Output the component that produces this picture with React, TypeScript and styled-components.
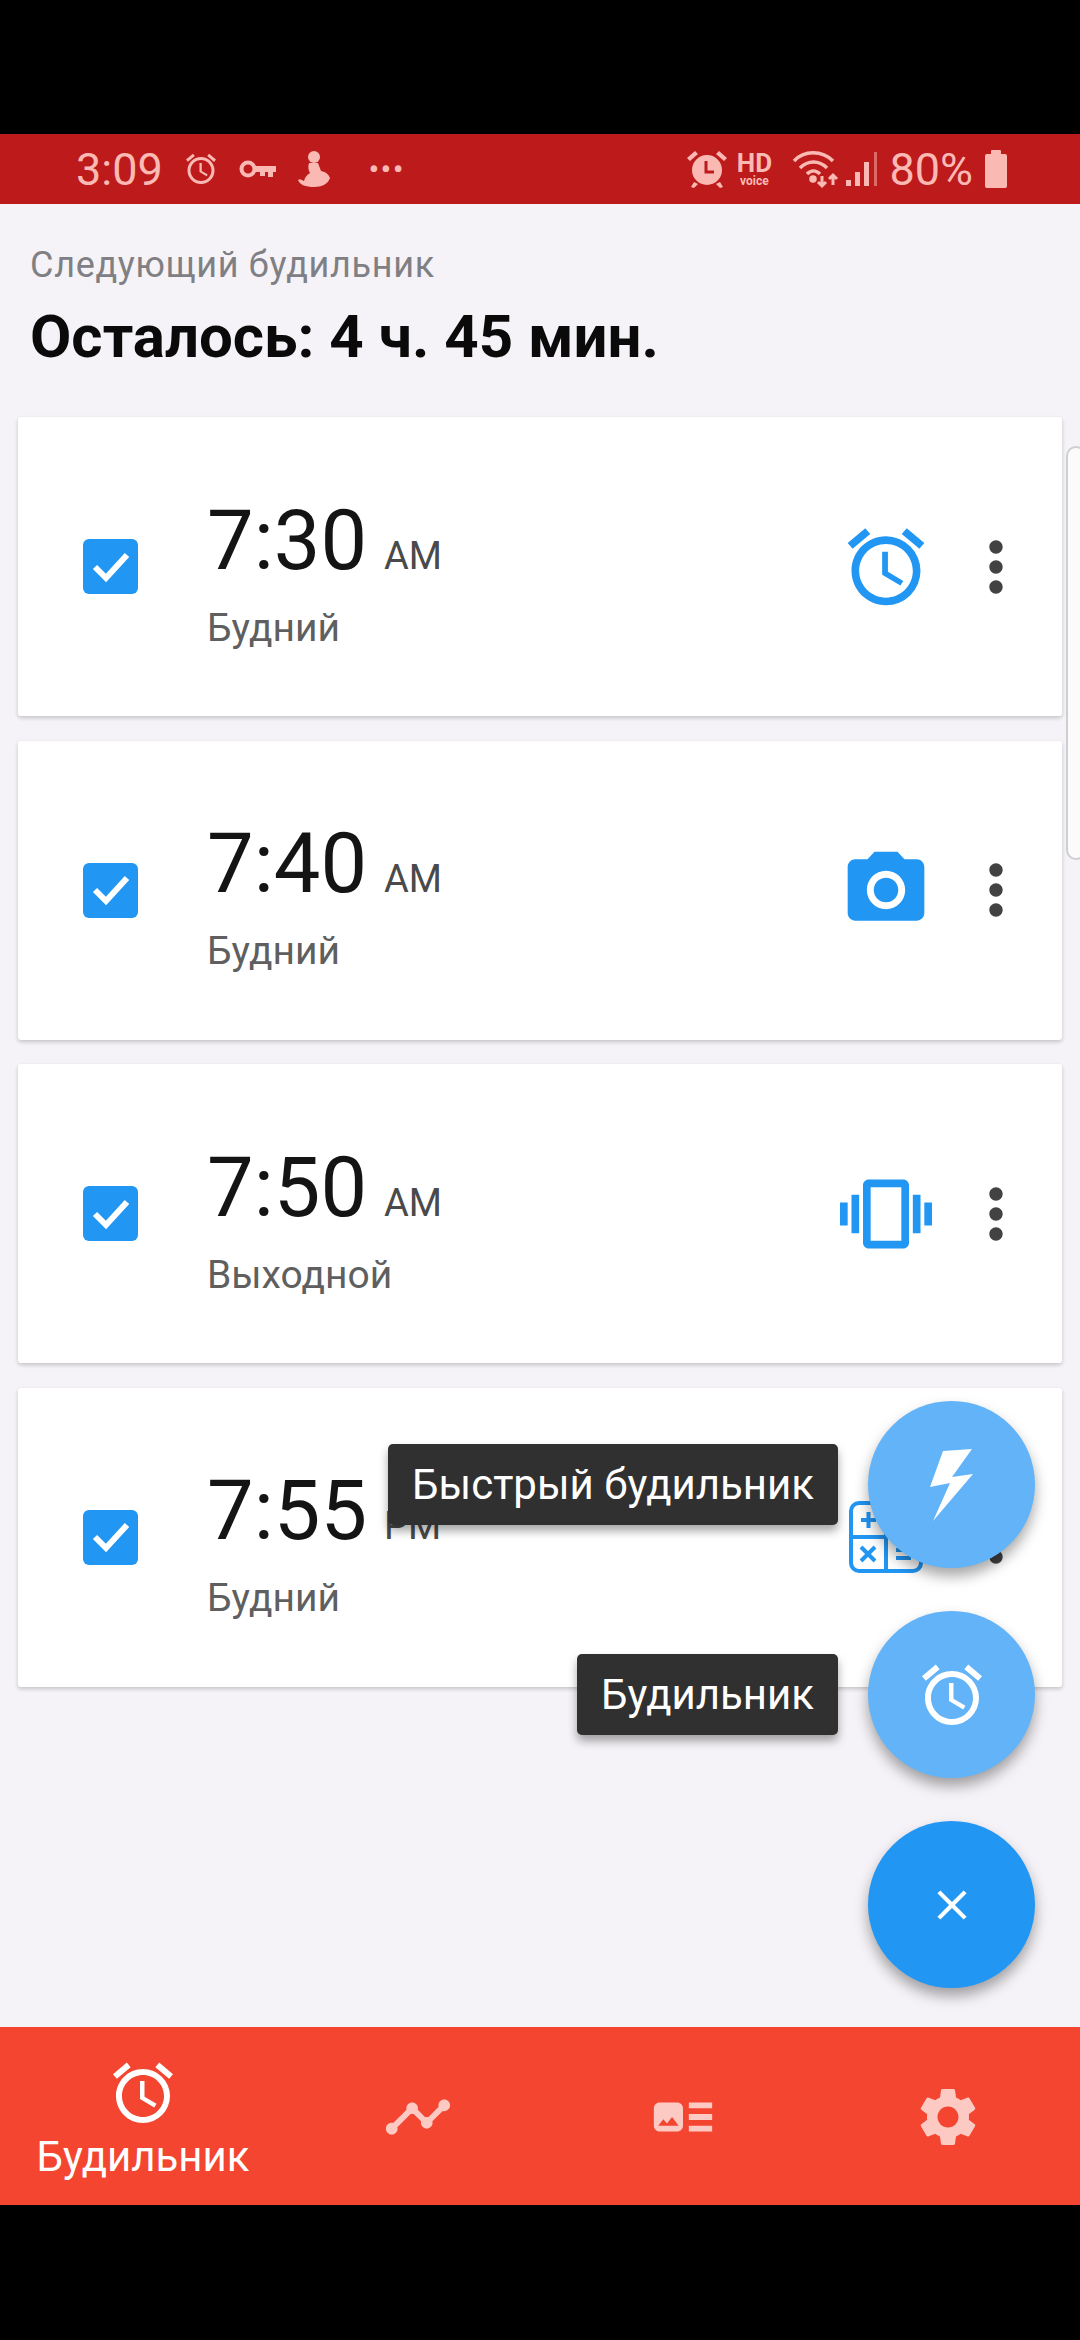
import React from "react";
import styled, { createGlobalStyle } from "styled-components";
import {
  MdAccessAlarm,
  MdArtTrack,
  MdClose,
  MdMoreVert,
  MdPhotoCamera,
  MdSettings,
  MdTimeline,
  MdVibration,
} from "react-icons/md";

const GlobalStyle = createGlobalStyle`
  html, body {
    margin: 0;
    padding: 0;
    background: #000;
  }
  * {
    box-sizing: border-box;
  }
`;

const Screen = styled.div`
  position: relative;
  width: 1080px;
  height: 2340px;
  display: flex;
  flex-direction: column;
  overflow: hidden;
  background: #000;
  font-family: Roboto, "Noto Sans", sans-serif;
`;

const BlackBar = styled.div<{ $height: number }>`
  flex: none;
  height: ${(p) => p.$height}px;
  background: #000;
`;

const StatusBar = styled.div`
  flex: none;
  height: 70px;
  padding: 0 73px 0 76px;
  display: flex;
  align-items: center;
  justify-content: space-between;
  background: #bc1a1b;
  color: #fbb9b4;
`;

const StatusGroup = styled.div`
  display: flex;
  align-items: center;
`;

const StatusTime = styled.span`
  font-size: 45px;
  margin-right: 20px;
`;

const StatusSlot = styled.span<{ $left: number }>`
  display: flex;
  margin-left: ${(p) => p.$left}px;
`;

const StatusDots = styled.span`
  margin-left: 38px;
  font-size: 28px;
  font-weight: 700;
  letter-spacing: 2px;
`;

const StatusPercent = styled.span`
  font-size: 45px;
  margin: 0 12px 0 9px;
`;

const HdBadge = styled.div`
  width: 40px;
  margin: 0 18px 0 6px;
  display: flex;
  flex-direction: column;
  align-items: center;
  font-weight: 700;
  font-size: 26px;
  line-height: 24px;
  span {
    font-size: 12px;
    line-height: 12px;
  }
`;

const Content = styled.main`
  flex: 1;
  display: flex;
  flex-direction: column;
  background: #f5f3f7;
`;

const Header = styled.header`
  height: 213px;
  padding: 40px 30px 0;
`;

const NextLabel = styled.div`
  font-size: 36px;
  line-height: 42px;
  letter-spacing: 0.7px;
  color: #808084;
`;

const Remaining = styled.h1`
  margin: 20px 0 0;
  font-size: 60px;
  line-height: 62px;
  font-weight: 700;
  color: #0a0a0a;
`;

const AlarmList = styled.div`
  display: flex;
  flex-direction: column;
  gap: 24.5px;
  padding: 0 18px;
`;

const Card = styled.section`
  height: 299px;
  padding-left: 65px;
  display: flex;
  align-items: center;
  background: #fff;
  border-radius: 3px;
  box-shadow: 0 2px 4px rgba(0, 0, 0, 0.2);
`;

const Check = styled.div`
  flex: none;
  width: 55px;
  height: 55px;
  display: flex;
  align-items: center;
  justify-content: center;
  border-radius: 6px;
  background: #2196f3;
  color: #fff;
`;

const AlarmText = styled.div`
  flex: 1;
  margin-left: 69px;
  padding-top: 8px;
`;

const TimeRow = styled.div`
  display: flex;
  align-items: baseline;
  color: #141414;
`;

const Time = styled.span`
  font-size: 83px;
  line-height: 100px;
`;

const Meridiem = styled.span`
  margin-left: 17px;
  font-size: 38px;
  color: #4a4a4a;
`;

const Repeat = styled.div`
  margin-top: 14px;
  font-size: 39px;
  line-height: 46px;
  color: #5f5f5f;
`;

const TaskIcon = styled.div`
  flex: none;
  width: 92px;
  display: flex;
  justify-content: center;
  color: #2196f3;
  font-size: 92px;
`;

const MoreButton = styled.div`
  flex: none;
  width: 80px;
  margin: 0 26px 0 24px;
  display: flex;
  justify-content: center;
  color: #424242;
  font-size: 80px;
`;

const EdgeHandle = styled.div`
  position: absolute;
  top: 446px;
  right: -6px;
  width: 20px;
  height: 414px;
  border: 2px solid #cfcfd2;
  border-radius: 14px;
  background: #fbfbfc;
`;

const FabStack = styled.div`
  position: absolute;
  top: 1401px;
  right: 45px;
  display: flex;
  flex-direction: column;
  align-items: flex-end;
  gap: 43px;
`;

const FabRow = styled.div`
  display: flex;
  align-items: center;
  gap: 30px;
`;

const FabTip = styled.div`
  height: 81px;
  padding: 0 24px;
  display: flex;
  align-items: center;
  border-radius: 5px;
  background: #303030;
  color: #fff;
  font-size: 42px;
  box-shadow: 0 6px 10px rgba(0, 0, 0, 0.35);
`;

const Fab = styled.div<{ $main?: boolean }>`
  width: 167px;
  height: 167px;
  display: flex;
  align-items: center;
  justify-content: center;
  border-radius: 50%;
  background: ${(p) => (p.$main ? "#2196f3" : "#62b3f7")};
  color: #fff;
  font-size: ${(p) => (p.$main ? 50 : 72)}px;
  box-shadow: 0 8px 14px rgba(0, 0, 0, 0.35);
`;

const BottomNav = styled.nav`
  flex: none;
  height: 178px;
  display: grid;
  grid-template-columns: 286px 1fr 1fr 1fr;
  background: #f44531;
`;

const NavItem = styled.div<{ $active?: boolean }>`
  display: flex;
  flex-direction: column;
  align-items: center;
  justify-content: center;
  color: ${(p) => (p.$active ? "#fff" : "#fdc9c3")};
  font-size: ${(p) => (p.$active ? 72 : 70)}px;
  padding-top: ${(p) => (p.$active ? 4 : 2)}px;
`;

const NavLabel = styled.span`
  font-size: 42px;
  line-height: 44px;
  margin-top: 6px;
`;

function CheckMark() {
  return (
    <svg width="40" height="34" viewBox="0 0 40 34" fill="none" stroke="currentColor" strokeWidth="6">
      <path d="M4 17l11 11L36 5" />
    </svg>
  );
}

function KeyIcon() {
  return (
    <svg width="38" height="20" viewBox="0 0 38 20" fill="none">
      <circle cx="9" cy="10" r="6.5" stroke="currentColor" strokeWidth="4" />
      <path d="M15 7h22v6h-3v5h-5v-5h-3v4h-5v-4h-6z" fill="currentColor" />
    </svg>
  );
}

function FigureIcon() {
  return (
    <svg width="34" height="38" viewBox="0 0 34 38" fill="currentColor">
      <circle cx="17" cy="7" r="6" />
      <path d="M12 13h9l3 8c5 1 8 4 9 7-2 6-8 9-16 9S3 35 1 30c2-1 4 0 6 1 1-4 3-6 6-8-2-3-2-7-1-10z" />
    </svg>
  );
}

function FilledAlarmIcon() {
  return (
    <svg width="42" height="40" viewBox="0 0 42 40">
      <path d="M1 9 9 2l3 3-8 7zM41 9l-8-7-3 3 8 7z" fill="currentColor" />
      <path d="M8 33l-3 5 3 1 4-4zM34 33l3 5-3 1-4-4z" fill="currentColor" />
      <circle cx="21" cy="21" r="15" fill="currentColor" />
      <path d="M20 12v11h8" fill="none" stroke="#bc1a1b" strokeWidth="3" />
    </svg>
  );
}

function WifiIcon() {
  return (
    <svg width="48" height="40" viewBox="0 0 48 40" fill="none" stroke="currentColor" strokeWidth="3.5">
      <path d="M2 12C12 1 30 1 41 12" />
      <path d="M8 19c8-8 19-8 27 0" />
      <path d="M15 25c4-4 9-4 13 0" />
      <circle cx="21" cy="30" r="2" fill="currentColor" />
      <path d="M30 27v10M26 33l4 4 4-4M41 36V26M37 30l4-4 4 4" strokeWidth="3" />
    </svg>
  );
}

function SignalIcon() {
  return (
    <svg width="34" height="36" viewBox="0 0 34 36" fill="currentColor">
      <rect x="0" y="29" width="5" height="6" />
      <rect x="9" y="21" width="5" height="14" />
      <rect x="18" y="11" width="5" height="24" />
      <rect x="28" y="1" width="3" height="34" opacity="0.5" />
    </svg>
  );
}

function BatteryIcon() {
  return (
    <svg width="22" height="38" viewBox="0 0 22 38" fill="currentColor">
      <rect x="6" y="0" width="10" height="5" rx="1" />
      <rect x="0" y="4" width="22" height="34" rx="2" />
    </svg>
  );
}

function CalculatorIcon() {
  return (
    <svg width="74" height="72" viewBox="0 0 74 72" fill="none" stroke="currentColor" strokeWidth="4">
      <rect x="2" y="2" width="70" height="68" rx="8" />
      <path d="M37 2v68M2 36h70" />
      <path d="M12 19h15M19.500 11v16M47 19h15M12 46l14 14M26 46 12 60M47 49h15M47 57h15" />
    </svg>
  );
}

function BoltIcon() {
  return (
    <svg width="43" height="72" viewBox="0 0 43 72" fill="currentColor">
      <path d="M42 0 13 2 0 38l20-4L3 72l40-47-21 3z" />
    </svg>
  );
}

const alarms = [
  { time: "7:30", meridiem: "AM", repeat: "Будний", icon: <MdAccessAlarm /> },
  { time: "7:40", meridiem: "AM", repeat: "Будний", icon: <MdPhotoCamera /> },
  { time: "7:50", meridiem: "AM", repeat: "Выходной", icon: <MdVibration /> },
  { time: "7:55", meridiem: "PM", repeat: "Будний", icon: <CalculatorIcon /> },
];

export default function App() {
  return (
    <Screen>
      <GlobalStyle />
      <BlackBar $height={134} />
      <StatusBar>
        <StatusGroup>
          <StatusTime>3:09</StatusTime>
          <MdAccessAlarm size={36} />
          <StatusSlot $left={20}>
            <KeyIcon />
          </StatusSlot>
          <StatusSlot $left={20}>
            <FigureIcon />
          </StatusSlot>
          <StatusDots>•••</StatusDots>
        </StatusGroup>
        <StatusGroup>
          <FilledAlarmIcon />
          <HdBadge>
            HD
            <span>voice</span>
          </HdBadge>
          <WifiIcon />
          <StatusSlot $left={6}>
            <SignalIcon />
          </StatusSlot>
          <StatusPercent>80%</StatusPercent>
          <BatteryIcon />
        </StatusGroup>
      </StatusBar>

      <Content>
        <Header>
          <NextLabel>Следующий будильник</NextLabel>
          <Remaining>Осталось: 4 ч. 45 мин.</Remaining>
        </Header>
        <AlarmList>
          {alarms.map((alarm) => (
            <Card key={alarm.time}>
              <Check>
                <CheckMark />
              </Check>
              <AlarmText>
                <TimeRow>
                  <Time>{alarm.time}</Time>
                  <Meridiem>{alarm.meridiem}</Meridiem>
                </TimeRow>
                <Repeat>{alarm.repeat}</Repeat>
              </AlarmText>
              <TaskIcon>{alarm.icon}</TaskIcon>
              <MoreButton>
                <MdMoreVert />
              </MoreButton>
            </Card>
          ))}
        </AlarmList>
      </Content>

      <BottomNav>
        <NavItem $active>
          <MdAccessAlarm />
          <NavLabel>Будильник</NavLabel>
        </NavItem>
        <NavItem>
          <MdTimeline />
        </NavItem>
        <NavItem>
          <MdArtTrack />
        </NavItem>
        <NavItem>
          <MdSettings />
        </NavItem>
      </BottomNav>
      <BlackBar $height={135} />

      <EdgeHandle />
      <FabStack>
        <FabRow>
          <FabTip>Быстрый будильник</FabTip>
          <Fab>
            <BoltIcon />
          </Fab>
        </FabRow>
        <FabRow>
          <FabTip>Будильник</FabTip>
          <Fab>
            <MdAccessAlarm />
          </Fab>
        </FabRow>
        <FabRow>
          <Fab $main>
            <MdClose />
          </Fab>
        </FabRow>
      </FabStack>
    </Screen>
  );
}
